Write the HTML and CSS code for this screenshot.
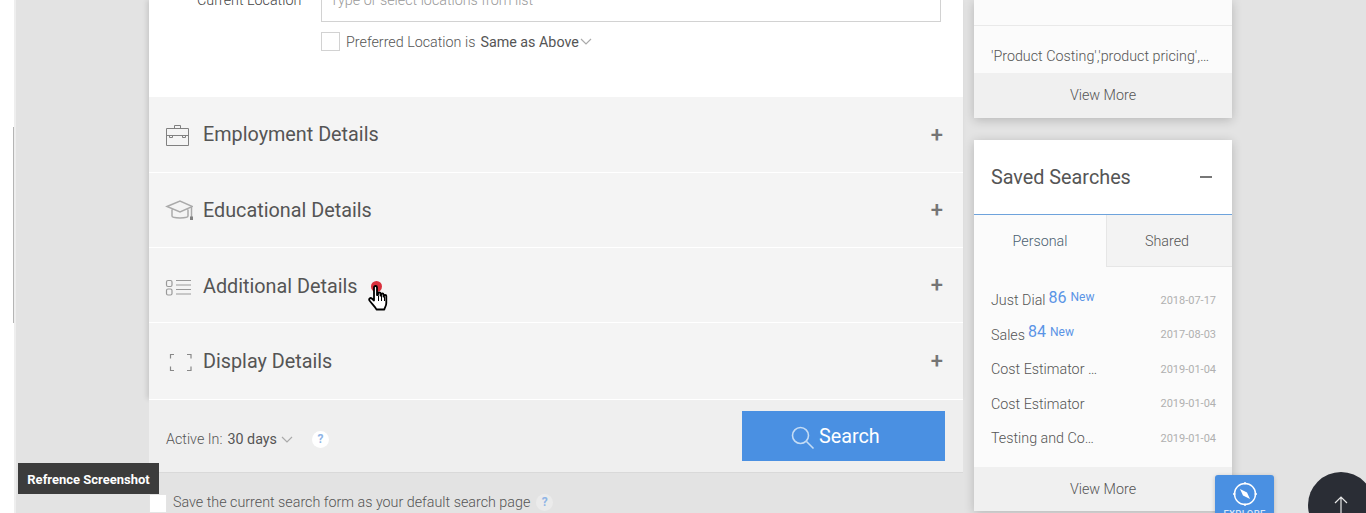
FILE: index.html
```html
<!DOCTYPE html>
<html lang="en">
<head>
<meta charset="utf-8">
<title>Search</title>
<link rel="stylesheet" href="styles.css">
</head>
<body>
<div class="page">
  <div class="strip"><span class="strip-line"></span></div>
  <main class="main">
    <div class="form">
    <section class="location">
      <div class="loc-row">
        <label class="loc-label">Current Location</label>
        <div class="loc-input">Type or select locations from list</div>
      </div>
      <div class="pref-row">
        <span class="check"></span>
        <span class="pref-label">Preferred Location is</span>
        <span class="pref-value">Same as Above</span>
        <svg class="chev" width="12" height="7" viewBox="0 0 12 7"><path d="M1 1l5 5 5-5" fill="none" stroke="#aaa" stroke-width="1.2"/></svg>
      </div>
    </section>
    <div class="acc acc-1">
      <svg class="acc-icon" width="28" height="24" viewBox="0 0 28 24" fill="none" stroke="#808080" stroke-width="1"><path d="M1.500 5.500h22v17h-22zM1.500 12.500h22M9.500 5.500v-3h6v3"/><path d="M4.500 12.500v2h3v-2M17.500 12.500v2h3v-2"/></svg>
      <span class="acc-title">Employment Details</span><span class="plus">+</span>
    </div>
    <div class="acc acc-2">
      <svg class="acc-icon" width="28" height="24" viewBox="0 0 28 24" fill="none" stroke="#aaa" stroke-width="1.500"><path d="M2 8.500L15 3l12.500 5.500L15 14zM7 11.500V18c0 2.500 16 2.500 16 0v-6.500M26.500 9v10"/><rect x="25" y="18.500" width="3.500" height="3.500" fill="#808080" stroke="none"/></svg>
      <span class="acc-title">Educational Details</span><span class="plus">+</span>
    </div>
    <div class="acc acc-3">
      <svg class="acc-icon" width="28" height="24" viewBox="0 0 28 24" fill="none" stroke="#999" stroke-width="1.200"><rect x="1.500" y="7.500" width="5.500" height="6" rx="1.500"/><rect x="1.500" y="16" width="5.500" height="6" rx="1.500"/><path d="M11 7.500h15M11 12h15M11 16.500h15M11 21h15"/></svg>
      <span class="acc-title">Additional Details</span><span class="plus">+</span>
    </div>
    <div class="acc acc-4">
      <svg class="acc-icon" width="28" height="24" viewBox="0 0 28 24" fill="none" stroke="#888" stroke-width="1.200"><path d="M5.500 9.500v-4H9M22 5.500h4v4M5.500 17.500v4H9M22 21.500h4v-4"/></svg>
      <span class="acc-title">Display Details</span><span class="plus">+</span>
    </div>
    </div>
    <div class="foot">
      <span class="active-label">Active In:</span>
      <span class="active-value">30 days</span>
      <svg class="chev" width="12" height="7" viewBox="0 0 12 7"><path d="M1 1l5 5 5-5" fill="none" stroke="#aaa" stroke-width="1.200"/></svg>
      <span class="help help-white">?</span>
      <button class="search-btn">
        <svg class="search-icon" width="26" height="26" viewBox="0 0 26 26" fill="none" stroke="#c4dcf5" stroke-width="1.600"><circle cx="10.500" cy="10.500" r="8"/><path d="M16.500 16.500l7 7"/></svg>
        <span>Search</span>
      </button>
    </div>
    <div class="save-row">
      <span class="check check-white"></span>
      <span class="save-text">Save the current search form as your default search page</span>
      <span class="help help-grey">?</span>
    </div>
  </main>
  <aside class="side">
    <section class="card card-top">
      <div class="top-blank"></div>
      <p class="keywords">'Product Costing','product pricing',…</p>
      <div class="view-more">View More</div>
    </section>
    <section class="card card-saved">
      <header class="saved-head">
        <h2 class="saved-title">Saved Searches</h2>
        <span class="minus"></span>
      </header>
      <div class="tabs">
        <div class="tab tab-on">Personal</div>
        <div class="tab tab-off">Shared</div>
      </div>
      <ul class="list">
        <li class="item"><span class="name">Just Dial</span><span class="count">86</span><span class="new">New</span><time class="date">2018-07-17</time></li>
        <li class="item"><span class="name">Sales</span><span class="count">84</span><span class="new">New</span><time class="date">2017-08-03</time></li>
        <li class="item"><span class="name">Cost Estimator …</span><time class="date">2019-01-04</time></li>
        <li class="item"><span class="name">Cost Estimator</span><time class="date">2019-01-04</time></li>
        <li class="item"><span class="name">Testing and Co…</span><time class="date">2019-01-04</time></li>
      </ul>
      <div class="view-more view-more-2">View More</div>
    </section>
  </aside>
  <div class="tooltip">Refrence Screenshot</div>
  <div class="explore">
    <svg width="26" height="26" viewBox="0 0 26 26" fill="none" stroke="#fff" stroke-width="1.400"><circle cx="13" cy="13" r="10.500"/><path d="M13 1v2.500M13 22.500V25M1 13h2.500M22.500 13H25"/><path d="M8 8l7 3.500 3 6.500-7-3.500z" fill="#fff" stroke="none"/></svg>
    <span class="explore-text">EXPLORE</span>
  </div>
  <div class="top-btn">
    <svg width="14" height="18" viewBox="0 0 14 18" fill="none" stroke="#e8e8e8" stroke-width="1.200"><path d="M7 18V1M1 7l6-6 6 6"/></svg>
  </div>
  <div class="pointer">
    <span class="dot"></span>
    <svg class="hand" width="22" height="26" viewBox="0 0 22 26"><path d="M6 2.500c0-2 3-2 3 0V10l1 0V8.500c0-1.500 2.500-1.500 2.500 0V10.500h.6V9.500c0-1.500 2.400-1.500 2.400 0V11.500h.5V11c0-1.400 2.300-1.400 2.300 0v7c0 3-1.500 4.500-2 6.500H8.500C7.500 22 4 19 1.500 15.500c-1-1.500.8-3.200 2.300-2L6 15.500z" fill="#fff" stroke="#000" stroke-width="1.800" stroke-linejoin="round"/><path d="M10.500 11v5M13.500 11v5M16.500 12v4" stroke="#000" stroke-width="1"/></svg>
  </div>
</div>
</body>
</html>
```
FILE: styles.css
```css
* { box-sizing: border-box; }
html, body { margin: 0; padding: 0; }
body { font-family: Roboto, "Liberation Sans", sans-serif; color: #555; background: #e3e3e3; }
.page { position: relative; display: flex; width: 1366px; height: 513px; overflow: hidden; background: #e3e3e3; }

.strip { flex: 0 0 16px; background: #fff; border-right: 2px solid #eee; padding-top: 127px; }
.strip-line { display: block; width: 1px; height: 196px; margin-left: 13px; background: #b5b5b5; }

.main { flex: 0 0 814px; margin-left: 133px; display: flex; flex-direction: column; }
.form { flex: none; box-shadow: -2px 0 5px rgba(0,0,0,.12); }

.location { height: 97px; background: #fff; padding-left: 172px; position: relative; overflow: hidden; }
.loc-row { display: flex; margin-top: -14px; }
.loc-label { position: absolute; left: 48px; top: -9px; font-size: 14.300px; font-weight: 300; line-height: 18px; color: #444; white-space: nowrap; }
.loc-input { width: 620px; height: 36px; border: 1px solid #d2d2d2; padding: 4px 8px; font-size: 14.300px; font-weight: 300; line-height: 18px; color: #999; }
.pref-row { display: flex; align-items: center; margin-top: 10px; height: 19px; }
.check { display: block; flex: none; width: 19px; height: 19px; border: 1px solid #d2d2d2; background: #fff; }
.pref-label { margin-left: 6px; font-size: 14.300px; font-weight: 300; color: #555; }
.pref-value { margin-left: 5px; font-size: 14.300px; color: #555; }
.chev { margin-left: 1px; flex: none; }

.acc { display: flex; align-items: center; padding: 0 20px 0 16px; background: #f4f4f4; border-bottom: 1px solid #fff; }
.acc-1 { height: 76px; }
.acc-2 { height: 75px; }
.acc-3 { height: 75px; }
.acc-3 .acc-title { padding-top: 2px; }
.acc-4 { height: 76px; border-bottom: 0; }
.acc-icon { flex: none; margin-right: 10px; }
.acc-title { flex: 1; font-size: 19.800px; color: #555; }
.plus { font-size: 22px; font-weight: 500; line-height: 20px; color: #757575; }

.foot { flex: none; display: flex; align-items: center; height: 74px; padding: 0 18px 0 17px; background: #efefef; border-top: 1px solid #fff; border-bottom: 1px solid #d9d9d9; }
.active-label { margin-top: 6px; font-size: 14.300px; font-weight: 300; color: #555; }
.active-value { margin: 6px 0 0 5px; font-size: 14.300px; color: #555; }
.foot .chev { margin: 6px 0 0 4px; }
.help { display: flex; align-items: center; justify-content: center; width: 17px; height: 17px; border-radius: 50%; font-size: 12px; font-weight: 700; color: #8fb5e6; }
.help-white { margin: 6px 0 0 19px; background: #fff; }
.help-grey { margin-left: 6px; background: #ebebeb; }
.search-btn { display: flex; align-items: center; gap: 3px; width: 203px; height: 50px; margin-left: auto; border: 0; background: #4a90e2; color: #fff; font: 400 19.800px Roboto, sans-serif; padding: 0 0 0 48px; }
.search-icon { margin-top: 4px; }

.save-row { display: flex; align-items: center; height: 19px; margin-top: 21px; flex: none; }
.check-white { border: 1px solid #e4e4e4; width: 18px; }
.save-text { margin: -3px 0 0 6px; font-size: 14.300px; font-weight: 300; color: #555; white-space: nowrap; }
.save-row .help { margin-top: -3px; }

.side { flex: 0 0 258px; margin-left: 11px; display: flex; flex-direction: column; gap: 22px; }
.card { background: #fbfbfb; box-shadow: 0 2px 10px rgba(0,0,0,.2); flex: none; }
.top-blank { height: 26px; border-bottom: 1px solid #e9e9e9; }
.keywords { margin: 0; height: 47px; padding: 21px 0 0 17px; font-size: 14.300px; font-weight: 300; line-height: 18px; color: #555; white-space: nowrap; }
.view-more { height: 45px; background: #f0f0f0; font-size: 14.300px; font-weight: 300; line-height: 44px; color: #555; text-align: center; }
.view-more-2 { height: 44px; }

.saved-head { display: flex; align-items: center; justify-content: space-between; height: 75px; padding: 0 20px 0 17px; background: #fff; border-bottom: 1px solid #6ea3dc; }
.saved-title { margin: 0; font-size: 19.800px; font-weight: 400; color: #555; }
.minus { display: block; width: 12px; height: 2px; margin-top: -1px; background: #777; }
.tabs { display: flex; height: 52px; }
.tab { font-size: 14.300px; font-weight: 300; line-height: 52px; text-align: center; color: #555; }
.tab-on { flex: 0 0 132px; color: #4a6070; }
.tab-off { flex: 1; padding-right: 5px; background: #f3f3f3; border-left: 1px solid #e6e6e6; border-bottom: 1px solid #e6e6e6; }
.list { list-style: none; margin: 0; padding: 16px 16px 0 17px; height: 200px; }
.item { display: flex; align-items: center; height: 34.500px; font-size: 14.300px; font-weight: 300; color: #555; white-space: nowrap; }
.name { color: #555; }
.count { margin-left: 3px; font-size: 16px; font-weight: 400; color: #5a94e6; margin-top: -6px; }
.new { margin-left: 4px; font-size: 12px; font-weight: 400; color: #5a94e6; margin-top: -6px; }
.date { margin-left: auto; font-size: 11px; font-weight: 400; color: #b0b0b0; }

.tooltip { position: absolute; left: 18px; top: 463px; width: 141px; height: 31px; background: #3c3c3c; color: #fff; font-size: 13px; font-weight: 700; line-height: 33px; text-align: center; white-space: nowrap; }
.explore { position: absolute; left: 1215px; top: 475px; width: 59px; height: 50px; background: #4a90e2; border-radius: 3px; display: flex; flex-direction: column; align-items: center; padding-top: 6px; box-shadow: 0 1px 4px rgba(0,0,0,.2); }
.explore-text { font-size: 9.500px; font-weight: 500; color: #d9e8fa; line-height: 12px; letter-spacing: .3px; margin-top: 1px; }
.top-btn { position: absolute; left: 1308px; top: 472px; width: 66px; height: 66px; border-radius: 50%; background: #2a2d35; display: flex; justify-content: center; padding: 24px 0 0 0; }
.pointer { position: absolute; left: 370px; top: 280px; width: 22px; height: 32px; }
.dot { position: absolute; left: 1px; top: 1px; width: 11px; height: 11px; border-radius: 50%; background: #d9303c; }
.hand { position: absolute; left: -2px; top: 5px; }
```
